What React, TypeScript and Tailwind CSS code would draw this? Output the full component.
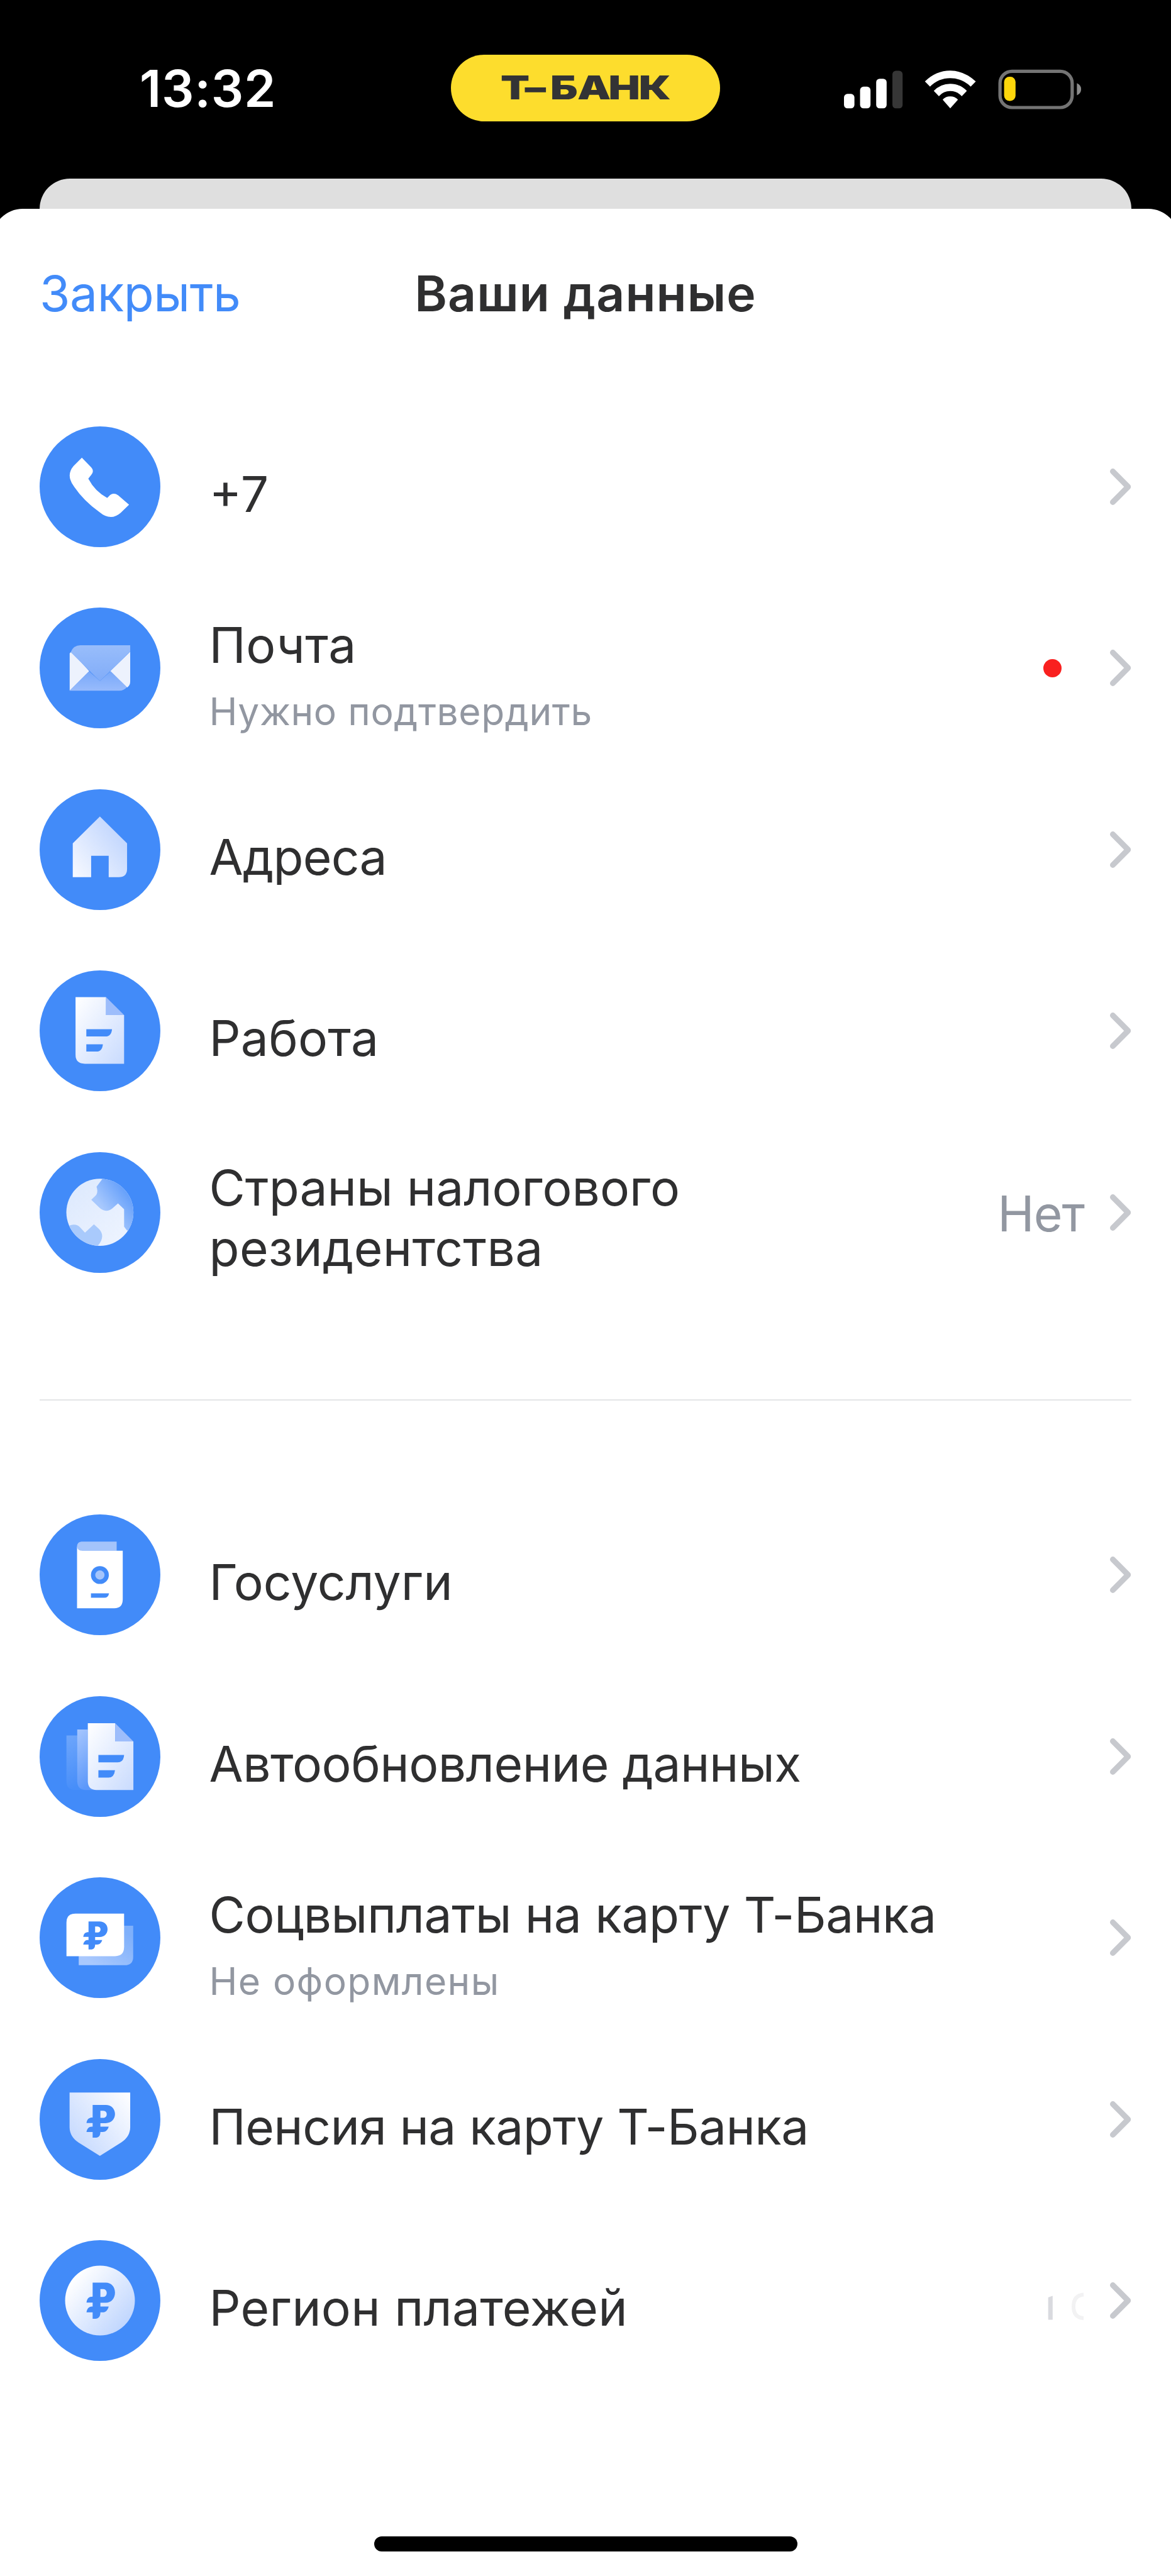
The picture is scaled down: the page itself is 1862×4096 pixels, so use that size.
import type { ReactNode } from "react";

const BLUE = "#428bf9";

function Disc({ children }: { children: ReactNode }) {
  return (
    <svg viewBox="0 0 243 243" className="h-48 w-48 shrink-0" aria-hidden="true">
      <circle cx="121.5" cy="121.5" r="121.5" fill={BLUE} />
      {children}
    </svg>
  );
}

type SheenProps = { id: string; from: string; to: string; x1?: number; y1?: number; x2?: number; y2?: number };

function Sheen({ id, from, to, x1 = 0, y1 = 0, x2 = 1, y2 = 1 }: SheenProps) {
  return (
    <linearGradient id={id} x1={x1} y1={y1} x2={x2} y2={y2}>
      <stop offset="0" stopColor={from} />
      <stop offset="1" stopColor={to} />
    </linearGradient>
  );
}

const RUBLE =
  "M106.7 92.3H133C144 92.3 151.7 100 151.7 110.5S144 129 133 129H122.3V136H139C137 143 133 146.7 127 146.7H122.3C122.3 154 119 158.3 112 158.3H106.7V146.7H94.3C95.5 140 99 136 105 136H106.7V128.8H94.3C95.5 121 99 117.7 106.7 117.7ZM122.3 104V118.3H128C137.5 118.3 137.5 104 128 104Z";

const Phone = () => (
  <Disc>
    <path d="M85 63L104 82.5Q110.500 89.500 104 97.500L98 105Q110.500 130 136 144L142 138Q149 132.500 158 138.500L180 157.500L163 174Q143 191.500 120 172Q89 150 70 122Q52 99 68 80Z" fill="#fff" />
  </Disc>
);

const Mail = () => (
  <Disc>
    <defs>
      <Sheen id="flap" from="#98bdfb" to="#81acf8" x2={0} />
      <Sheen id="pocket" from="#78a8f9" to="#98bbfc" x2={0} />
    </defs>
    <path d="M60.500 167.300V92L64 89L100 128Z M182.300 89V149Q182.300 157 176 161L142 128Z" fill="#edf2fd" />
    <path d="M60.500 167.300L99.500 128L121.300 148L143 128L175.500 160Q170 167.300 160 167.300Z" fill="url(#pocket)" />
    <path d="M62.500 90Q68 75.900 82 75.900H182.300V89L121.300 148Z" fill="url(#flap)" />
  </Disc>
);

const Home = () => (
  <Disc>
    <defs><Sheen id="home" from="#f8faff" to="#c6d9fe" x1={0} y1={1} x2={0.8} y2={0.3} /></defs>
    <path d="M121.300 54.700L176 109V160Q176 176.800 159 176.800H139V133.900H103.700V176.800H66.700V109Z" fill="url(#home)" />
  </Disc>
);

const Doc = () => (
  <Disc>
    <defs><Sheen id="doc" from="#ffffff" to="#c9dbfe" /></defs>
    <path d="M72.300 53.900H133.700V90H170V187.800H91Q72.300 187.800 72.300 170Z" fill="url(#doc)" />
    <path d="M133.700 53.900L170 90H133.700Z" fill="#9dbdfb" />
    <path d="M94 118.300H145.700Q144.500 133 132 133H94Z M94 148.600H127.300Q126 163.300 114 163.300H94Z" fill={BLUE} />
  </Disc>
);

const Globe = () => (
  <Disc>
    <defs>
      <Sheen id="land" from="#dbe8fd" to="#f0f5ff" />
      <linearGradient id="sea" gradientUnits="userSpaceOnUse" x1="125" y1="110" x2="172" y2="76">
        <stop offset="0" stopColor="#a7c8fd" />
        <stop offset="1" stopColor="#66a0fa" />
      </linearGradient>
      <clipPath id="globe"><circle cx="121.300" cy="121" r="67.500" /></clipPath>
    </defs>
    <g clipPath="url(#globe)">
      <rect x="50" y="50" width="143" height="143" fill="url(#land)" />
      <path d="M127 53L114.500 69.500Q118 79 114 86L104 96L120 111.500Q133 124 147 112.500L157.700 103L170 114.700V150L176 158L200 150V40H127Z" fill="url(#sea)" />
      <path d="M55 150Q72 141 81 151L91.300 162L109.300 145.300L120 155Q133 170 117.300 188L100 200H50Z" fill="#a9cafc" />
    </g>
  </Disc>
);

const Passport = () => (
  <Disc>
    <path d="M84 54.800H155V73H84Q75.300 72 75.300 64Q76 55.500 84 54.800Z" fill="#a4c4fb" />
    <path d="M75.300 64Q76 73 86 73H167.300V171Q167.300 189 150 189H75.300Z" fill="#fff" />
    <circle cx="121.300" cy="122" r="18" fill={BLUE} />
    <circle cx="121.300" cy="122" r="9.300" fill="#a4c4fb" />
    <path d="M103.300 158.700H139.700Q138 167.800 130 167.800H103.300Z" fill={BLUE} />
  </Disc>
);

const Stack = () => (
  <Disc>
    <defs>
      <Sheen id="sheet" from="#ffffff" to="#c9dbfe" />
      <Sheen id="mid" from="#a6c6fd" to="#5c98fa" x2={0.3} />
      <Sheen id="rear" from="#6ea6fb" to="#478ef9" x2={0.2} />
    </defs>
    <path d="M54 79H76V171L94 189H72Q54 189 54 171Z" fill="url(#rear)" />
    <path d="M75.700 67H97V171L115 189H94Q75.700 189 75.700 171Z" fill="url(#mid)" />
    <path d="M97 54.400H152V91H188.700V189H115Q97 189 97 171Z" fill="url(#sheet)" />
    <path d="M152 54.400L188.700 91H152Z" fill="#9dbdfb" />
    <path d="M118.300 118.400H170Q169 133.300 157 133.300H118.300Z M118.300 149H151.700Q150 164 138.500 164H118.300Z" fill={BLUE} />
  </Disc>
);

const Cards = () => (
  <Disc>
    <defs><Sheen id="back" from="#a9c8fd" to="#7fb0fb" x1={0.3} y1={1} x2={1} y2={0.3} /></defs>
    <path d="M78.700 97.300H188.300V160Q188.300 177 171 177H78.700Z" fill="url(#back)" />
    <path d="M54 158.700V91Q54 73 72 73H170V140Q170 158.700 152 158.700Z" fill="#fff" />
    <path transform="translate(7.500 10.300) scale(.852)" d={RUBLE} fill={BLUE} fillRule="evenodd" />
  </Disc>
);

const Shield = () => (
  <Disc>
    <defs><Sheen id="shield" from="#c4d8fe" to="#ffffff" x1={0} y1={0.8} x2={1} y2={0} /></defs>
    <path d="M60.300 67.300H182.300V137Q182.300 156 164 168L121.300 195L78.300 168Q60.300 156 60.300 137Z" fill="url(#shield)" />
    <path d={RUBLE} fill={BLUE} fillRule="evenodd" />
  </Disc>
);

const Coin = () => (
  <Disc>
    <defs><Sheen id="coin" from="#ffffff" to="#bdd4fe" x1={0.1} y1={0.2} x2={0.9} y2={0.9} /></defs>
    <circle cx="121.500" cy="121.500" r="70.200" fill="url(#coin)" />
    <path transform="translate(0 -16) scale(1 1.1)" d={RUBLE} fill={BLUE} fillRule="evenodd" />
  </Disc>
);

const Chevron = () => (
  <svg viewBox="0 0 36 60" className="h-[60px] w-9 shrink-0" fill="none" aria-hidden="true">
    <path d="M6.500 5.600L30.700 30L6.500 54.400" stroke="#c7c9ce" strokeWidth="9" strokeLinecap="round" strokeLinejoin="round" />
  </svg>
);

/* Remains of a wiped-out value: one faint stem and one fainter arc. */
const HiddenValue = () => (
  <svg viewBox="0 0 60 50" className="mr-[41px] h-[50px] w-[60px] overflow-visible" fill="none" aria-hidden="true">
    <path d="M4.700 55.400V20L11.800 17.500V55.400Z" fill="#d9dadf" />
    <path d="M61 15.500Q45 17 45 34.500T61 53" stroke="#f2f2f3" strokeWidth="6" />
  </svg>
);

function StatusIcons() {
  return (
    <svg viewBox="1690 130 490 94" className="h-[74.400px] w-[387.900px]" aria-hidden="true">
      <g fill="#fff">
        <rect x="1695" y="186" width="21" height="29" rx="7" />
        <rect x="1727.300" y="171.500" width="21" height="43.500" rx="7" />
        <rect x="1759.700" y="155.500" width="21" height="59.500" rx="7" />
        <rect x="1792.300" y="139.500" width="20.500" height="75.500" rx="7" fill="#363636" />
        <path d="M1857.600 161Q1880 139.300 1908.500 139.300T1959.800 161L1949.600 171.300Q1932 154.300 1908.500 154.300T1867.900 171.300Z" />
        <path d="M1875.400 180Q1889 165.700 1908.500 165.700T1941.900 180L1931.600 190.500Q1922 180.300 1908.500 180.300T1885.700 190.500Z" />
        <path d="M1893.300 197.700Q1899 191 1908.500 191T1924 197.700L1908.500 215Z" />
      </g>
      <rect x="2008.500" y="140.600" width="145" height="72.800" rx="24" fill="none" stroke="#747474" strokeWidth="6.600" />
      <rect x="2016.700" y="151.500" width="23" height="48.500" rx="10.500" fill="#fed70b" />
      <path d="M2163 164.300Q2171.500 168 2171.500 176.500T2163 188.700Z" fill="#8c8c8c" />
    </svg>
  );
}

type Row = { icon: () => ReactNode; title: ReactNode; tracking?: string; note?: string; noteTracking?: string; pad?: string; value?: ReactNode };

const personal: Row[] = [
  { icon: Phone, title: "+7" },
  {
    icon: Mail,
    title: "Почта",
    tracking: "tracking-[0.4px]",
    note: "Нужно подтвердить",
    noteTracking: "tracking-[0.58px]",
    pad: "pt-[21px]",
    value: <span className="mr-[75px] h-[29px] w-[29px] rounded-full bg-[#f9201f]" />,
  },
  { icon: Home, title: "Адреса", tracking: "tracking-[-0.78px]" },
  { icon: Doc, title: "Работа", tracking: "tracking-[0.23px]" },
  {
    icon: Globe,
    title: <>Страны налогового<br /><span className="tracking-[0.36px]">резидентства</span></>,
    pad: "pt-[19px]",
    value: <span className="mr-[39px] pt-[5px] text-[78.500px] leading-[96px] tracking-[-1px] text-[#9297a1]">Нет</span>,
  },
];

const services: Row[] = [
  { icon: Passport, title: "Госуслуги" },
  { icon: Stack, title: "Автообновление данных", tracking: "tracking-[-0.45px]" },
  { icon: Cards, title: "Соцвыплаты на карту Т-Банка", tracking: "tracking-[-0.38px]", note: "Не оформлены", noteTracking: "tracking-[1.38px]", pad: "pt-[21px]" },
  { icon: Shield, title: "Пенсия на карту Т-Банка", tracking: "tracking-[-0.62px]" },
  { icon: Coin, title: "Регион платежей", tracking: "tracking-[0.25px]", value: <HiddenValue /> },
];

function List({ rows }: { rows: Row[] }) {
  return (
    <ul>
      {rows.map(({ icon: Icon, title, tracking = "", note, noteTracking = "", pad = "pt-6", value }, i) => (
        <li key={i} className="flex h-[288.500px] items-center">
          <Icon />
          <div className={`ml-[77.500px] flex-1 ${pad}`}>
            <p className={`text-[78.500px] leading-[96px] text-[#2f2f30] ${tracking}`}>{title}</p>
            {note && <p className={`mt-[21px] text-[60.500px] leading-[72px] text-[#9297a1] ${noteTracking}`}>{note}</p>}
          </div>
          {value}
          <Chevron />
        </li>
      ))}
    </ul>
  );
}

export default function App() {
  return (
    <main className="flex h-[4096px] w-[1862px] flex-col overflow-hidden bg-black font-['Inter',sans-serif]">
      <header className="grid h-[284px] grid-cols-[1fr_428px_1fr] items-center">
        <span className="pb-[2px] pl-[222px] text-[81px] font-semibold leading-none tracking-[0.7px] text-white">13:32</span>
        <span className="mb-[5px] flex h-[106px] items-center justify-center rounded-full bg-[#fddd2d]">
          <svg viewBox="0 0 340 48.300" className="h-[38.200px] w-[269px] overflow-visible">
            <text transform="scale(1.28 1)" y="48.300" x="-1 37 77 119.500 168.500 216" fill="#333335" className="text-[66.400px] font-black">Т–БАНК</text>
          </svg>
        </span>
        <span className="flex justify-end pr-[136px]"><StatusIcons /></span>
      </header>
      <div className="mx-[63px] h-12 shrink-0 rounded-t-[48px] bg-[#dfdfdf]" />
      <section className="-mx-3 flex flex-1 flex-col rounded-t-[48px] bg-white px-[75px]">
        <div className="grid h-[269px] grid-cols-[1fr_auto_1fr] items-center text-[78.500px] leading-[96px]">
          <span className="tracking-[-0.46px] text-[#428bf9]">Закрыть</span>
          <h1 className="font-semibold tracking-[1.07px] text-[#2f2f30]">Ваши данные</h1>
        </div>
        <div className="pt-[28.600px]"><List rows={personal} /></div>
        <hr className="mb-[133px] mt-[153px] border-t-2 border-[#e4e5e7]" />
        <List rows={services} />
        <div className="mx-auto mb-[39px] mt-auto h-6 w-[673px] rounded-full bg-black" />
      </section>
    </main>
  );
}
